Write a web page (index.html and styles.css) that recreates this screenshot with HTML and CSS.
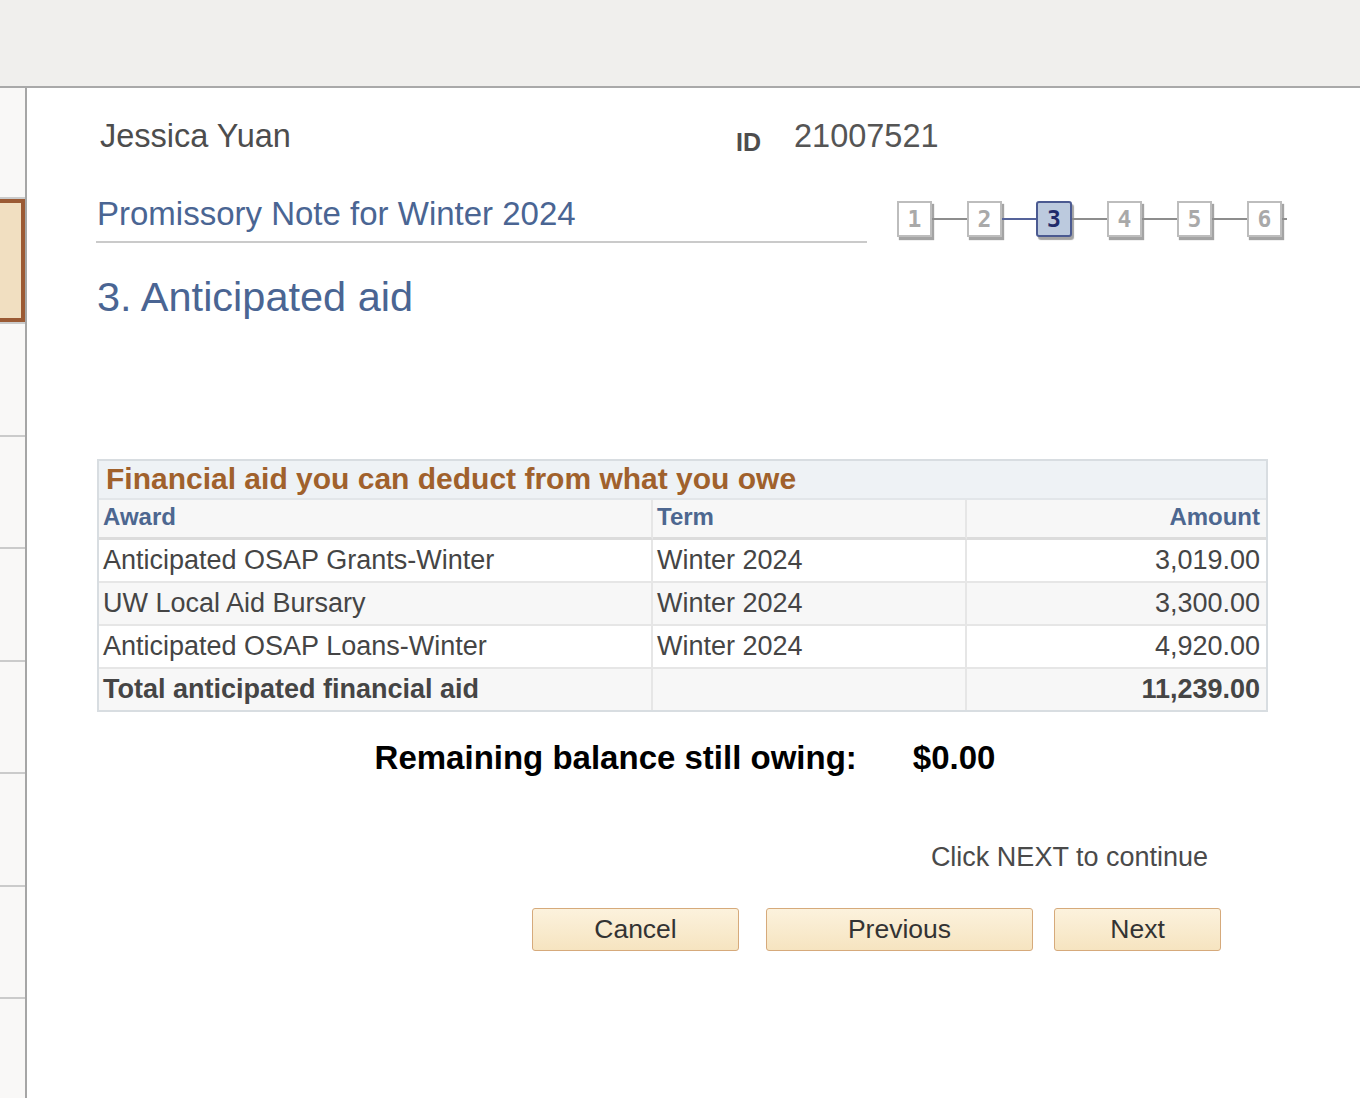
FILE: index.html
```html
<!DOCTYPE html>
<html lang="en">
<head>
<meta charset="utf-8">
<title>Promissory Note for Winter 2024</title>
<link rel="stylesheet" href="styles.css">
</head>
<body>
<div class="topbar"></div>
<div class="layout">
  <nav class="sidebar">
    <div class="nav-item first"></div>
    <div class="nav-item selected"><div class="sel"></div></div>
    <div class="nav-item"></div>
    <div class="nav-item"></div>
    <div class="nav-item"></div>
    <div class="nav-item"></div>
    <div class="nav-item"></div>
    <div class="nav-item"></div>
    <div class="nav-item"></div>
  </nav>
  <main class="main">
    <div class="ident"><span class="name">Jessica Yuan</span><span class="id-label">ID</span><span class="id-value">21007521</span></div>
    <div class="title-row">
      <h1 class="page-title">Promissory Note for Winter 2024</h1>
      <ol class="steps">
        <li class="step">1</li><li class="link"></li>
        <li class="step">2</li><li class="link done"></li>
        <li class="step current">3</li><li class="link"></li>
        <li class="step">4</li><li class="link"></li>
        <li class="step">5</li><li class="link"></li>
        <li class="step">6</li><li class="link stub"></li>
      </ol>
    </div>
    <h2 class="step-title">3. Anticipated aid</h2>
    <table class="aid">
      <colgroup><col class="c1"><col class="c2"><col class="c3"></colgroup>
      <thead>
        <tr><th colspan="3" class="grid-title">Financial aid you can deduct from what you owe</th></tr>
        <tr class="head"><th>Award</th><th>Term</th><th class="num">Amount</th></tr>
      </thead>
      <tbody>
        <tr><td>Anticipated OSAP Grants-Winter</td><td>Winter 2024</td><td class="num">3,019.00</td></tr>
        <tr class="alt"><td>UW Local Aid Bursary</td><td>Winter 2024</td><td class="num">3,300.00</td></tr>
        <tr><td>Anticipated OSAP Loans-Winter</td><td>Winter 2024</td><td class="num">4,920.00</td></tr>
        <tr class="alt total"><td>Total anticipated financial aid</td><td></td><td class="num">11,239.00</td></tr>
      </tbody>
    </table>
    <div class="balance"><span>Remaining balance still owing:</span><span>$0.00</span></div>
    <p class="hint">Click NEXT to continue</p>
    <div class="actions">
      <button class="btn cancel" type="button">Cancel</button>
      <button class="btn previous" type="button">Previous</button>
      <button class="btn next" type="button">Next</button>
    </div>
  </main>
</div>
</body>
</html>
```

FILE: styles.css
```css
html, body {
  margin: 0;
  height: 100%;
}
body {
  font-family: "Liberation Sans", Arial, sans-serif;
  background: #ffffff;
  overflow: hidden;
}
.topbar {
  height: 86px;
  background: #f0efed;
  border-bottom: 2px solid #a9a9a9;
}
.layout {
  display: flex;
  height: 1010px;
}
.sidebar {
  flex: none;
  width: 25px;
  background: #f9f8f7;
  border-right: 2px solid #a6a6a6;
  display: flex;
  flex-direction: column;
  overflow: hidden;
}
.nav-item {
  flex: none;
  height: 110.5px;
  border-bottom: 2px solid #cbcbcb;
}
.nav-item.first {
  height: 109px;
}
.nav-item.selected {
  height: 123px;
}
.sel {
  height: 123px;
  box-sizing: border-box;
  border: 4px solid #9b5a34;
  border-left: 0;
  background: #f1dfc1;
}
.main {
  flex: 1;
  padding: 29px 0 0 70px;
  background: #ffffff;
}
.ident {
  padding-left: 3px;
  line-height: 38px;
  height: 38px;
  color: #4d4d4d;
}
.name {
  display: inline-block;
  width: 636px;
  font-size: 32.5px;
}
.id-label {
  font-size: 25px;
  font-weight: bold;
  vertical-align: -4px;
}
.id-value {
  margin-left: 33px;
  font-size: 32.5px;
  color: #555555;
}
.title-row {
  display: flex;
  align-items: flex-start;
  margin-top: 40px;
}
.page-title {
  margin: 0 0 0 -1px;
  padding: 0 0 8px 1px;
  width: 771px;
  box-sizing: border-box;
  font-size: 33px;
  font-weight: normal;
  line-height: 38px;
  color: #4a6593;
  border-bottom: 2px solid #cacaca;
}
.steps {
  margin: 6px 0 0 30px;
  padding: 0;
  list-style: none;
  display: flex;
  align-items: center;
}
.step {
  width: 35px;
  height: 36px;
  box-sizing: border-box;
  border: 2px solid #bdbdbd;
  background: #ffffff;
  box-shadow: 2px 3px 1px #a4a4a4;
  display: flex;
  align-items: center;
  justify-content: center;
  font-family: "DejaVu Sans Mono", monospace;
  font-weight: bold;
  font-size: 23px;
  color: #a9a9a9;
}
.step.current {
  width: 36px;
  height: 36px;
  background: #bccade;
  border-color: #4b5a91;
  border-radius: 3px;
  color: #1f2b6b;
}
.link {
  width: 35px;
  height: 2px;
  background: #8d8d8d;
}
.link.done {
  background: #55639a;
  width: 34px;
}
.link.stub {
  width: 5px;
}
.step-title {
  margin: 30px 0 0 0;
  font-size: 41.5px;
  font-weight: normal;
  line-height: 48px;
  color: #4a6593;
}
.aid {
  margin-top: 138px;
  width: 1171px;
  table-layout: fixed;
  border-collapse: separate;
  border-spacing: 0;
  border: 2px solid #d8dde1;
}
.c1 { width: 554px; }
.c2 { width: 314px; }
.c3 { width: 299px; }
.grid-title {
  background: #eef2f5;
  color: #a0612c;
  font-size: 30px;
  font-weight: bold;
  text-align: left;
  line-height: 35px;
  padding: 0 0 2px 7px;
  border-bottom: 2px solid #e2e6e9;
  white-space: nowrap;
}
.head th {
  background: #f7f7f7;
  color: #4d6790;
  font-size: 24px;
  font-weight: bold;
  text-align: left;
  line-height: 34px;
  padding: 0 4px 3px 4px;
  border-bottom: 3px solid #dcdcdc;
  border-right: 2px solid #e6e6e6;
}
.aid td {
  font-size: 27px;
  color: #454545;
  line-height: 41px;
  padding: 0 4px;
  border-bottom: 2px solid #e6e6e6;
  border-right: 2px solid #e6e6e6;
  white-space: nowrap;
  background: #ffffff;
}
.aid .head th:last-child,
.aid td:last-child {
  border-right: 0;
}
.aid .num {
  text-align: right;
  padding-right: 6px;
}
.aid tr.alt td {
  background: #f7f7f7;
}
.aid tr.total td {
  font-weight: bold;
  border-bottom: 0;
}
.balance {
  margin-top: 26px;
  width: 1171px;
  padding-left: 5px;
  box-sizing: border-box;
  display: flex;
  justify-content: center;
  gap: 56px;
  font-size: 33px;
  font-weight: bold;
  line-height: 40px;
  color: #000000;
}
.hint {
  margin: 63px 0 0 0;
  width: 1171px;
  padding-right: 60px;
  box-sizing: border-box;
  text-align: right;
  font-size: 27px;
  line-height: 32px;
  color: #4a4a4a;
}
.actions {
  margin-top: 35px;
  width: 1171px;
  padding-right: 47px;
  box-sizing: border-box;
  display: flex;
  justify-content: flex-end;
}
.btn {
  height: 43px;
  padding: 0;
  font-family: "Liberation Sans", Arial, sans-serif;
  font-size: 26.5px;
  color: #333333;
  background: linear-gradient(#fcf2dd, #f6e4c0);
  border: 1.5px solid #d6aa7b;
  border-radius: 3px;
}
.cancel { width: 207px; }
.previous { width: 267px; margin-left: 27px; }
.next { width: 167px; margin-left: 21px; }
```
